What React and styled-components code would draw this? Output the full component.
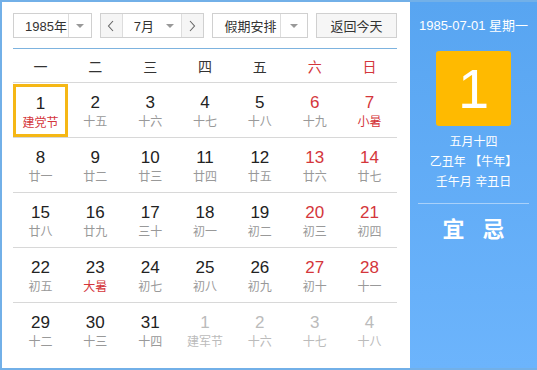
import React from "react";
import styled, { createGlobalStyle } from "styled-components";

const GlobalStyle = createGlobalStyle`
  body {
    margin: 0;
    background: #fff;
    font-family: "Liberation Sans", "Noto Sans CJK SC", sans-serif;
  }
`;

const weekNames = ["一", "二", "三", "四", "五", "六", "日"];

// [day, lunar, flags]  r = red number, f = red lunar text, o = other month, s = selected
const weeks = [
  [[1, "建党节", "sf"], [2, "十五"], [3, "十六"], [4, "十七"], [5, "十八"], [6, "十九", "r"], [7, "小暑", "rf"]],
  [[8, "廿一"], [9, "廿二"], [10, "廿三"], [11, "廿四"], [12, "廿五"], [13, "廿六", "r"], [14, "廿七", "r"]],
  [[15, "廿八"], [16, "廿九"], [17, "三十"], [18, "初一"], [19, "初二"], [20, "初三", "r"], [21, "初四", "r"]],
  [[22, "初五"], [23, "大暑", "f"], [24, "初七"], [25, "初八"], [26, "初九"], [27, "初十", "r"], [28, "十一", "r"]],
  [[29, "十二"], [30, "十三"], [31, "十四"], [1, "建军节", "o"], [2, "十六", "o"], [3, "十七", "o"], [4, "十八", "o"]],
];

const Frame = styled.div`
  display: flex;
  width: 537px;
  height: 370px;
  box-sizing: border-box;
  border: 2px solid #72b0e8;
  border-right: none;
  overflow: hidden;
`;

const Main = styled.div`
  width: 384px;
  padding: 11px 13px 0 11px;
  display: flex;
  flex-direction: column;
`;

const Toolbar = styled.div`
  display: flex;
  align-items: center;
  gap: 8px;
  height: 25px;
  padding-bottom: 10px;
  border-bottom: 1px solid #7db3df;
`;

const Box = styled.div`
  display: flex;
  align-items: stretch;
  height: 25px;
  box-sizing: border-box;
  width: ${(p) => p.$w}px;
  border: 1px solid #d0d0d0;
  background: #fff;
  font-size: 13px;
  color: #333;
`;

const SelectText = styled.div`
  flex: 1;
  display: flex;
  align-items: center;
  padding-left: ${(p) => p.$pl || 0}px;
`;

const Caret = styled.div`
  width: ${(p) => p.$w || 22}px;
  display: flex;
  align-items: center;
  justify-content: center;
  border-left: ${(p) => (p.$line ? "1px solid #ddd" : "none")};
  &::after {
    content: "";
    border-left: 4px solid transparent;
    border-right: 4px solid transparent;
    border-top: 4px solid #999;
  }
`;

const NavBtn = styled.div`
  width: 21px;
  display: flex;
  align-items: center;
  justify-content: center;
  background: #f5f5f5;
  border-left: ${(p) => (p.$right ? "1px solid #ddd" : "none")};
  border-right: ${(p) => (p.$right ? "none" : "1px solid #ddd")};
`;

const TodayBtn = styled.div`
  margin-left: auto;
  width: 81px;
  height: 25px;
  box-sizing: border-box;
  border: 1px solid #d0d0d0;
  background: #f6f6f6;
  display: flex;
  align-items: center;
  justify-content: center;
  font-size: 13px;
  color: #333;
`;

const WeekHead = styled.div`
  display: grid;
  grid-template-columns: repeat(7, 1fr);
  height: 33px;
  border-bottom: 1px solid #d8d8d8;
  align-items: center;
`;

const WeekName = styled.div`
  text-align: center;
  font-size: 14px;
  padding-top: 1px;
  color: ${(p) => (p.$red ? "#d4363b" : "#333")};
`;

const Row = styled.div`
  display: grid;
  grid-template-columns: repeat(7, 1fr);
  height: 54px;
  border-bottom: ${(p) => (p.$last ? "none" : "1px solid #d8d8d8")};
`;

const Cell = styled.div`
  display: flex;
  flex-direction: column;
  align-items: center;
  box-sizing: border-box;
  padding-top: ${(p) => (p.$sel ? 7 : 10)}px;
  border: ${(p) => (p.$sel ? "3px solid #f5b715" : "none")};
  margin-top: ${(p) => (p.$sel ? 1 : 0)}px;
`;

const DayNum = styled.div`
  font-size: 17px;
  line-height: 19px;
  color: ${(p) => (p.$other ? "#bbb" : p.$red ? "#d4363b" : "#222")};
`;

const Lunar = styled.div`
  margin-top: 2px;
  font-size: 12px;
  line-height: 16px;
  color: ${(p) => (p.$other ? "#bbb" : p.$red ? "#d4363b" : "#999")};
`;

const Side = styled.div`
  flex: 1;
  background: linear-gradient(#58a5f1, #6cb4fc);
  display: flex;
  flex-direction: column;
  align-items: center;
  color: #fff;
`;

const DateLine = styled.div`
  margin-top: 15px;
  font-size: 13px;
  line-height: 18px;
`;

const BigDay = styled.div`
  margin-top: 16px;
  width: 75px;
  height: 75px;
  border-radius: 3px;
  background: #ffba00;
  display: flex;
  align-items: center;
  justify-content: center;
  font-size: 56px;
  line-height: 1;
`;

const Info = styled.div`
  margin-top: 6px;
  font-size: 12px;
  line-height: 20px;
  text-align: center;
`;

const Divider = styled.div`
  align-self: stretch;
  margin: 11px 8px 0;
  height: 1px;
  background: #a9d1fa;
`;

const YiJi = styled.div`
  display: flex;
  gap: 18px;
  margin-top: 12px;
  font-size: 22px;
  line-height: 28px;
  font-weight: bold;
`;

const Chevron = ({ dir }) => (
  <svg width="8" height="12" viewBox="0 0 8 12">
    <path
      d={dir === "l" ? "M6 1 L1.5 6 L6 11" : "M2 1 L6.5 6 L2 11"}
      fill="none"
      stroke="#666"
      strokeWidth="1.1"
    />
  </svg>
);

export default function App() {
  return (
    <>
      <GlobalStyle />
      <Frame>
        <Main>
          <Toolbar>
            <Box $w={79}>
              <SelectText $pl={11}>1985年</SelectText>
              <Caret $line />
            </Box>
            <Box $w={104}>
              <NavBtn>
                <Chevron dir="l" />
              </NavBtn>
              <SelectText $pl={11}>7月</SelectText>
              <Caret />
              <NavBtn $right>
                <Chevron dir="r" />
              </NavBtn>
            </Box>
            <Box $w={97}>
              <SelectText $pl={12}>假期安排</SelectText>
              <Caret $w={26} $line />
            </Box>
            <TodayBtn>返回今天</TodayBtn>
          </Toolbar>
          <WeekHead>
            {weekNames.map((w, i) => (
              <WeekName key={w} $red={i > 4}>
                {w}
              </WeekName>
            ))}
          </WeekHead>
          {weeks.map((week, ri) => (
            <Row key={ri} $last={ri === weeks.length - 1}>
              {week.map(([d, l, f = ""], ci) => (
                <Cell key={ci} $sel={f.includes("s")}>
                  <DayNum $red={f.includes("r")} $other={f.includes("o")}>
                    {d}
                  </DayNum>
                  <Lunar $red={f.includes("f")} $other={f.includes("o")}>
                    {l}
                  </Lunar>
                </Cell>
              ))}
            </Row>
          ))}
        </Main>
        <Side>
          <DateLine>1985-07-01 星期一</DateLine>
          <BigDay>1</BigDay>
          <Info>
            五月十四
            <br />
            乙丑年 【牛年】
            <br />
            壬午月 辛丑日
          </Info>
          <Divider />
          <YiJi>
            <span>宜</span>
            <span>忌</span>
          </YiJi>
        </Side>
      </Frame>
    </>
  );
}
